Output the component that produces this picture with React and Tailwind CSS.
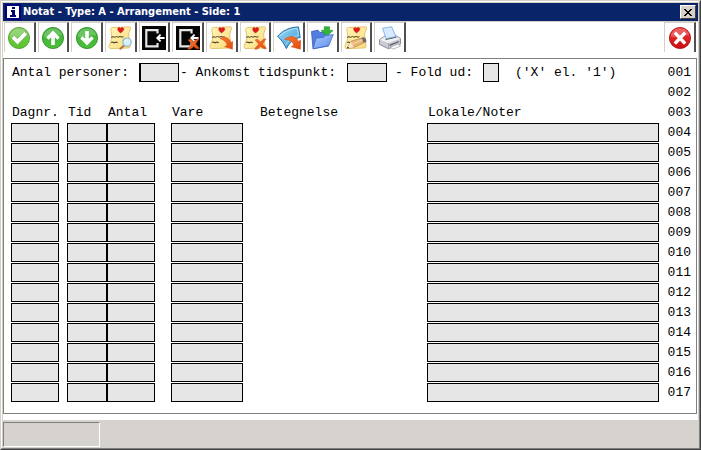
import React from 'react';

const lines = ['004', '005', '006', '007', '008', '009', '010', '011', '012', '013', '014', '015', '016', '017'];

const Note = () => (
  <>
    <path d="M4.5 1.5 L21.5 .8 C22.6 1 22.8 2 22.4 3 L20.6 8 L22 20 C22 21.5 21.6 22 20 22 L3 22.6 C1 22.6 .8 21 1.2 19.5 L4 12 L2.8 4 C2.8 2.5 3 1.6 4.5 1.5Z" fill="url(#paper)" stroke="#e0b955" strokeWidth=".8" />
    <path d="M12.6 6.9 C9 5 9 1.6 11.2 1.6 C12 1.6 12.6 2.3 12.6 2.8 C12.8 1.9 13.6 1.4 14.5 1.6 C17 2.2 15.8 5.2 12.6 6.9Z" fill="#e01b1b" stroke="#b80f0f" strokeWidth=".4" />
    <path d="M3 11.4 L5 10.7 L6.5 11.3 L8.5 10.5 L10 11.2 L12 10.5 L14 11.1 L15.5 10.7" fill="none" stroke="#4a4024" strokeWidth="1" />
    <path d="M3.2 16.6 L4.8 16 L6.2 16.8 L8 16.1 L9.8 16.7" fill="none" stroke="#4a4024" strokeWidth="1.1" />
  </>
);

const Cross = () => (
  <path d="M12.2 14 C14 12.6 15.4 13.5 17.4 16 C19 14.3 20.6 12.6 23 13 C21.7 14.8 20.5 16 19.6 18 C20.8 19.7 22.6 20.7 23.4 22.4 C21 23.6 19.5 22.3 17.6 20.3 C16 22 14.5 23.8 11.8 23.2 C12.6 21 14.5 20 15.5 18.2 C14.4 16.7 13.5 15.2 12.2 14Z" fill="url(#orange)" stroke="#c9440c" strokeWidth=".5" />
);

const CurvedArrow = () => (
  <path d="M11 12.4 C15.6 9.8 20.6 12 21.8 16.6 L23.8 15.4 L23.4 23.2 L15.6 20.6 L18.2 19.2 C17.4 15.8 15 14 11 12.4Z" fill="url(#orange)" stroke="#cf4a0e" strokeWidth=".5" />
);

const Disc = ({ fill, edge, children }) => (
  <>
    <circle cx="12" cy="12" r="10.6" fill={fill} stroke={edge} strokeWidth=".8" />
    <path d="M2.6 10.5 C3.5 4.8 7.4 2.4 12 2.4 C16.6 2.4 20.4 5 21.3 9.5 C15 7.8 9 13 2.6 10.5Z" fill="#fff" opacity=".22" />
    {children}
  </>
);

const Exit = () => (
  <>
    <rect width="24" height="24" fill="#050505" />
    <path d="M15.5 7.5 V4.2 H4.3 V20.4 H15.5 V17" fill="none" stroke="#e4e4e4" strokeWidth="2.2" />
    <path d="M22.6 12 H15.6 M18.6 8.6 L15.2 12 L18.6 15.4" fill="none" stroke="#fff" strokeWidth="1.8" />
  </>
);

const icons = {
  ok: (
    <Disc fill="url(#green)" edge="#4a9c2a">
      <path d="M4.2 12.3 L7.2 9.4 L10.4 12.5 L17.3 5.6 L20.4 8.6 L10.5 18.8Z" fill="#fff" stroke="#4f9f34" strokeWidth=".5" />
    </Disc>
  ),
  up: (
    <Disc fill="url(#green2)" edge="#23891e">
      <path d="M12 4.5 L18.8 11.6 L16.4 13.7 L13.8 11.2 V19 H10.2 V11.2 L7.6 13.7 L5.2 11.6Z" fill="#fff" />
    </Disc>
  ),
  down: (
    <Disc fill="url(#green2)" edge="#23891e">
      <path d="M12 19.5 L18.8 12.4 L16.4 10.3 L13.8 12.8 V5 H10.2 V12.8 L7.6 10.3 L5.2 12.4Z" fill="#fff" />
    </Disc>
  ),
  search: (
    <>
      <Note />
      <path d="M15.8 19.8 L12.4 22.8" stroke="#b0763d" strokeWidth="2" strokeLinecap="round" />
      <circle cx="19" cy="16.2" r="4.2" fill="#d3effa" stroke="#8fb6cb" strokeWidth="1.2" />
      <path d="M16.8 15.8 C17.2 14.4 18.2 13.8 19.5 14" fill="none" stroke="#fff" strokeWidth="1" />
    </>
  ),
  exit: <Exit />,
  exitCancel: <><Exit /><Cross /></>,
  noteForward: <><Note /><CurvedArrow /></>,
  noteDelete: <><Note /><Cross /></>,
  forward: (
    <>
      <path d="M.6 10.4 C5 4.8 12.6 1.2 21.4 .9 L23.2 11.5 C18 12.2 13 15.2 9.4 22.6 C7.2 17.6 4.4 13.6 .6 10.4Z" fill="url(#blue)" stroke="#1f6ea6" strokeWidth="1" />
      <path d="M2.4 10.2 C7 5.8 13 3 20.4 2.4 L21.6 9.6 C16 10.4 12 13.4 8.8 18.6" fill="none" stroke="#c9ebfb" strokeWidth=".7" />
      <path d="M7.6 13.4 C13.4 8.6 19.6 10.2 21.2 15.4 L23.7 14 L23.4 23.2 L14.2 20.8 L16.8 19 C15.6 15.4 12.6 13.6 7.6 13.4Z" fill="url(#orange)" stroke="#cf4a0e" strokeWidth=".5" />
    </>
  ),
  folder: (
    <>
      <path d="M1.5 5.5 L8 4.2 L10 6.5 L18.5 6 V20 L3 22.8Z" fill="#4f7ee0" stroke="#3259b8" strokeWidth=".8" />
      <path d="M14.2 .8 H19.6 V4.4 H23 L17 10.2 L11 4.4 H14.2Z" fill="#35b53c" stroke="#188a24" strokeWidth=".6" />
      <path d="M6 12.3 L13.5 11.2 L15.6 9.4 L23.3 8.6 L18.8 19.6 L3 22.8Z" fill="url(#folder)" stroke="#4169c7" strokeWidth=".8" />
    </>
  ),
  edit: (
    <>
      <Note />
      <path d="M3 22.3 L6.8 15.3 L19.5 11.5 L22 15.8 L9.8 21.5Z" fill="#e9b777" stroke="#a8764a" strokeWidth=".6" />
      <path d="M17.3 12.2 L19.5 11.5 C21.5 11.4 23 14.2 22 15.8 L19.8 16.8Z" fill="#706a6a" />
      <path d="M3 22.3 L6.8 15.3 L8 18.3 L9.8 21.5Z" fill="#fae6c4" />
      <path d="M2.6 22.6 L3.9 20.4 L5.2 21.9Z" fill="#333" />
      <path d="M8 18 L18.5 13.8" stroke="#f8dbac" strokeWidth="1" />
    </>
  ),
  print: (
    <>
      <path d="M1.5 13.5 L7 10 L17.2 9.2 L22.5 12.5 V18 L10.5 22.8 L1.5 18.5Z" fill="#c9ccd2" stroke="#777b84" strokeWidth=".8" />
      <path d="M2 13.7 L10.5 17 L22 12.8 L17 9.8 L7 10.6Z" fill="#f0f1f4" />
      <path d="M4.6 2.2 L13.6 .8 L18 10.6 L8 12.6Z" fill="#d7eaff" stroke="#7daee4" strokeWidth=".9" />
      <path d="M7.5 13.6 L18.4 11.2" stroke="#5d626d" strokeWidth="1" />
      <path d="M10.5 17 V22" stroke="#9195a0" strokeWidth=".7" />
      <path d="M11.5 19.3 L21 15.5" stroke="#565b66" strokeWidth="1.3" />
      <path d="M12.5 21 L20 18 L22.7 19.8 L15 23.3Z" fill="#fafafa" stroke="#8a8e98" strokeWidth=".6" />
    </>
  ),
  cancel: (
    <Disc fill="url(#red)" edge="#a90f12">
      <path d="M8 7.8 L16 16.4 M16 7.8 L8 16.4" stroke="#fff" strokeWidth="3.4" strokeLinecap="square" />
    </Disc>
  ),
};

const tools = [
  ['ok', 'OK'],
  ['up', 'Side op'],
  ['down', 'Side ned'],
  ['search', 'Vis notat'],
  ['exit', 'Afslut'],
  ['exitCancel', 'Afslut uden at gemme'],
  ['noteForward', 'Flyt notat'],
  ['noteDelete', 'Slet notat'],
  ['forward', 'Send'],
  ['folder', 'Hent'],
  ['edit', 'Rediger notat'],
  ['print', 'Udskriv'],
];

const Gradients = () => (
  <svg className="absolute size-0" aria-hidden="true">
    <defs>
      <linearGradient id="paper" x1="0" y1="0" x2="1" y2="1">
        <stop offset="0" stopColor="#fff6b8" />
        <stop offset="1" stopColor="#fbdc80" />
      </linearGradient>
      <linearGradient id="orange" x1="0" y1="0" x2="1" y2="1">
        <stop offset="0" stopColor="#fb7a35" />
        <stop offset="1" stopColor="#e04a0c" />
      </linearGradient>
      <linearGradient id="green" x1="0" y1="0" x2="0" y2="1">
        <stop offset="0" stopColor="#7cc95a" />
        <stop offset="1" stopColor="#5cc42c" />
      </linearGradient>
      <linearGradient id="green2" x1="0" y1="0" x2="0" y2="1">
        <stop offset="0" stopColor="#3fae36" />
        <stop offset="1" stopColor="#4cc03a" />
      </linearGradient>
      <linearGradient id="red" x1="0" y1="0" x2="0" y2="1">
        <stop offset="0" stopColor="#ee3a3a" />
        <stop offset="1" stopColor="#cc0a10" />
      </linearGradient>
      <linearGradient id="blue" x1="0" y1="0" x2="1" y2="1">
        <stop offset="0" stopColor="#9bd8f6" />
        <stop offset="1" stopColor="#3d9cd6" />
      </linearGradient>
      <linearGradient id="folder" x1="0" y1="0" x2="1" y2="1">
        <stop offset="0" stopColor="#a9c8fb" />
        <stop offset="1" stopColor="#5f8ee8" />
      </linearGradient>
    </defs>
  </svg>
);

const ToolButton = ({ icon, label }) => (
  <button type="button" aria-label={label} className="flex h-[30px] min-w-0 items-center justify-center border-t border-r-2 border-l border-t-[#d4d0c8] border-r-[#505050] border-l-[#d4d0c8] bg-white">
    <svg viewBox="0 0 24 24" className="size-6 shrink-0">{icons[icon]}</svg>
  </button>
);

const Field = ({ className, ...props }) => (
  <input type="text" className={`block h-[19px] border border-black bg-[#e6e6e6] px-px outline-none ${className}`} {...props} />
);

const App = () => {
  return (
    <div className="min-h-screen border border-t-[#d4d0c8] border-r-[#404040] border-b-[#404040] border-l-[#d4d0c8] flex flex-col">
      <Gradients />
      <div className="flex grow flex-col border border-t-white border-r-[#808080] border-b-[#808080] border-l-white">
        <div className="flex grow flex-col border border-[#d4d0c8] border-b-0 bg-white">
          <header className="flex h-[18px] items-center bg-[#0a246a] pr-[2px] pl-[2px]">
            <svg viewBox="0 0 16 16" className="size-4" aria-hidden="true">
              <rect width="16" height="16" fill="#00007b" />
              <rect x="2" y="2" width="12" height="12" fill="#fff" />
              <path d="M7 3h3v2H7zM6 6h4v5h1v2H5v-2h2V8H6z" fill="#00007b" />
            </svg>
            <h1 className="grow pl-[2px] font-['DejaVu_Sans_Condensed','DejaVu_Sans',sans-serif] text-[11px] leading-4 font-bold text-white">
              Notat - Type: A - Arrangement - Side: 1
            </h1>
            <button type="button" aria-label="Luk" className="flex h-[14px] w-4 items-center justify-center border border-t-white border-r-[#404040] border-b-[#404040] border-l-white bg-[#d4d0c8]">
              <svg viewBox="0 0 8 7" className="h-[7px] w-2" shapeRendering="crispEdges">
                <path d="M0 0h2v1h1v1h2V1h1V0h2v1H7v1H6v1H5v1h1v1h1v1h1v1H6V6H5V5H3v1H2v1H0V6h1V5h1V4h1V3H2V2H1V1H0z" fill="#000" />
              </svg>
            </button>
          </header>

          <div className="flex justify-between border-t border-[#d4d0c8] pr-[2px] pl-px">
            <div className="grid w-[402px] grid-cols-12 gap-x-[2px]">
              {tools.map(([icon, label]) => <ToolButton key={icon} icon={icon} label={label} />)}
            </div>
            <div className="grid w-8">
              <ToolButton icon="cancel" label="Annuller" />
            </div>
          </div>

          <main className="mt-[6px] mr-px mb-[6px] border border-[#808080] pt-1 pr-[5px] pb-[10px] pl-[7px] font-['Liberation_Mono',monospace] text-[13px] leading-[19px] text-black">
            <div className="flex h-5">
              <label htmlFor="persons" className="w-32 pl-px">Antal personer:</label>
              <Field id="persons" className="w-10 border-l-2" />
              <label htmlFor="arrival" className="w-[168px] pl-px">- Ankomst tidspunkt:</label>
              <Field id="arrival" className="w-10" />
              <label htmlFor="unfold" className="w-24 pl-2">- Fold ud:</label>
              <Field id="unfold" className="w-4" />
              <span className="grow pl-4">('X' el. '1')</span>
              <span>001</span>
            </div>
            <div className="flex h-5 justify-end">002</div>
            <table className="w-full table-fixed border-collapse text-left">
              <colgroup>
                <col className="w-14" />
                <col className="w-10" />
                <col className="w-16" />
                <col className="w-[88px]" />
                <col className="w-[168px]" />
                <col />
                <col className="w-6" />
              </colgroup>
              <thead>
                <tr className="h-5 align-top">
                  <th className="p-0 pl-px font-normal">Dagnr.</th>
                  <th className="p-0 pl-px font-normal">Tid</th>
                  <th className="p-0 pl-px font-normal">Antal</th>
                  <th className="p-0 pl-px font-normal">Vare</th>
                  <th className="p-0 pl-px font-normal">Betegnelse</th>
                  <th className="p-0 pl-px font-normal">Lokale/Noter</th>
                  <td className="p-0 text-right">003</td>
                </tr>
              </thead>
              <tbody>
                {lines.map((line) => (
                  <tr key={line} className="h-5 align-top">
                    <td className="p-0 pr-2"><Field className="w-full" aria-label={`Dagnr. ${line}`} /></td>
                    <td className="p-0"><Field className="w-full" aria-label={`Tid ${line}`} /></td>
                    <td className="p-0 pr-4"><Field className="w-full" aria-label={`Antal ${line}`} /></td>
                    <td className="p-0 pr-4"><Field className="w-full" aria-label={`Vare ${line}`} /></td>
                    <td className="p-0" />
                    <td className="p-0 pr-2"><Field className="w-full" aria-label={`Lokale/Noter ${line}`} /></td>
                    <td className="p-0 text-right">{line}</td>
                  </tr>
                ))}
              </tbody>
            </table>
          </main>

          <footer className="flex grow bg-[#d6d3ce] pt-[2px] pb-px">
            <div className="w-[97px] border border-t-[#808080] border-r-white border-b-white border-l-[#808080]" />
          </footer>
        </div>
      </div>
    </div>
  );
};

export default App;
